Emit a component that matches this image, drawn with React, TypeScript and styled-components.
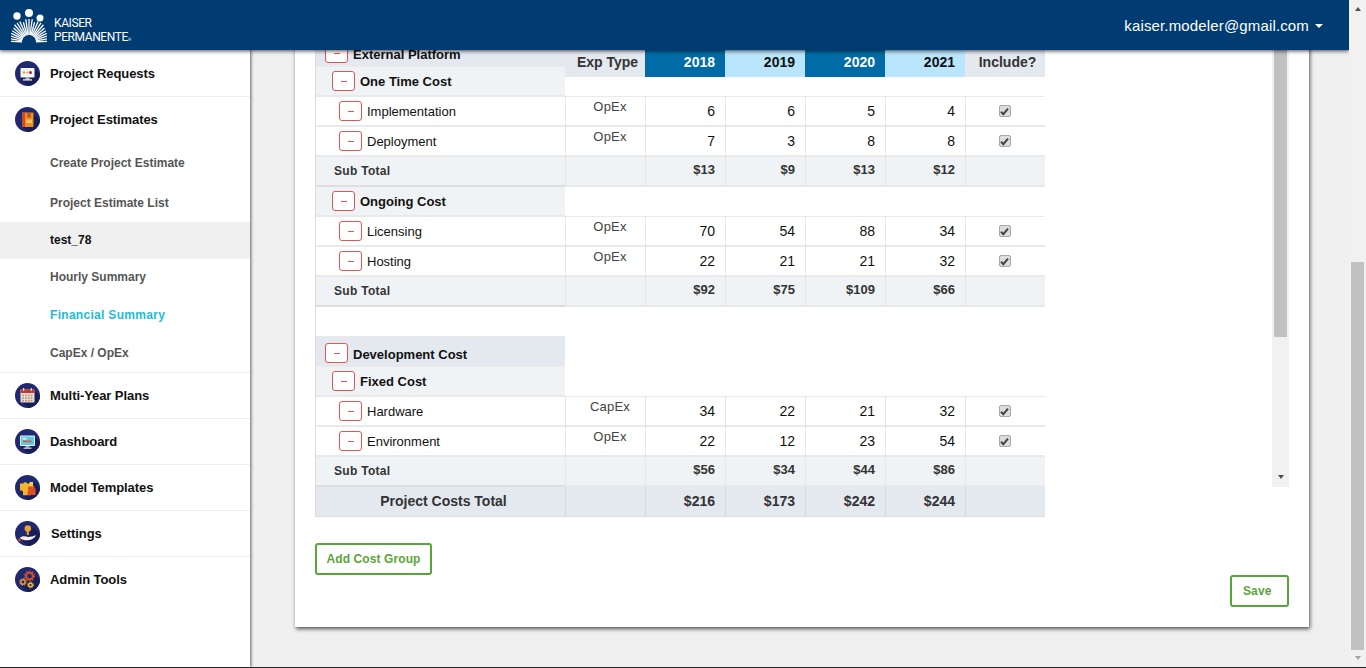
import React from "react";
import styled, { createGlobalStyle } from "styled-components";

const GlobalStyle = createGlobalStyle`
  html, body {
    margin: 0;
    height: 100%;
    overflow: hidden;
    background: #f0f0f0;
    font-family: "Liberation Sans", Arial, sans-serif;
  }
  * { box-sizing: border-box; }
`;

type IconName = "requests" | "estimates" | "plans" | "dashboard" | "templates" | "settings" | "admin";

const CircleIcon = ({ name }: { name: IconName }) => (
  <svg width="25" height="25" viewBox="0 0 25 25">
    <defs>
      <clipPath id={`clip-${name}`}>
        <circle cx="12.5" cy="12.5" r="12.5" />
      </clipPath>
    </defs>
    <circle cx="12.5" cy="12.5" r="12.5" fill="#20296f" />
    <path d="M6 18 L19 7 L27 15 L27 27 L15 27 Z" fill="#171e55" clipPath={`url(#clip-${name})`} />
    {name === "requests" && (
      <>
        <rect x="5.5" y="7" width="14" height="9.5" rx="1" fill="#f4f4f4" />
        <rect x="10.5" y="16.5" width="4" height="2" fill="#bdbdbd" />
        <rect x="8" y="18.2" width="9" height="1.4" fill="#e6e6e6" />
        <circle cx="9" cy="11.5" r="1.3" fill="#eda13a" />
        <circle cx="12.3" cy="11.5" r="0.9" fill="#eda13a" />
        <circle cx="15.5" cy="11.5" r="1.5" fill="#a8242a" />
      </>
    )}
    {name === "estimates" && (
      <>
        <rect x="7" y="5.5" width="11.5" height="14.5" rx="1" fill="#ee8d22" />
        <rect x="7" y="5.5" width="3" height="14.5" fill="#d4481d" />
        <rect x="12.5" y="5.5" width="3" height="5" fill="#b4521f" />
        <rect x="11" y="12.5" width="6" height="3.5" fill="#f7bd6b" />
      </>
    )}
    {name === "plans" && (
      <>
        <rect x="5.5" y="6.5" width="14" height="13" rx="1" fill="#e4e0da" />
        <rect x="5.5" y="6.5" width="14" height="3.5" fill="#c9352c" />
        <rect x="8" y="5" width="1.2" height="3" fill="#f3d9a0" />
        <rect x="15.8" y="5" width="1.2" height="3" fill="#f3d9a0" />
        {[7.2, 10, 12.8, 15.6].map((x) =>
          [11.5, 14.2, 16.8].map((y) => <rect key={`${x}-${y}`} x={x} y={y} width="1.8" height="1.8" fill="#c99a80" />)
        )}
      </>
    )}
    {name === "dashboard" && (
      <>
        <rect x="5" y="6.5" width="15" height="10.5" rx="1" fill="#e9f3f6" />
        <rect x="6" y="7.5" width="13" height="8.5" fill="#58cde4" />
        <rect x="7.5" y="9" width="4" height="1.5" fill="#f3f3f3" />
        <rect x="8" y="11.5" width="8.5" height="1.8" fill="#e2574c" />
        <rect x="10.5" y="17" width="4" height="1.8" fill="#a9a9a9" />
        <rect x="8.5" y="18.6" width="8" height="1.2" fill="#dedede" />
      </>
    )}
    {name === "templates" && (
      <>
        <path d="M5 8.500h3.200a2.200 2.200 0 0 1 4 0h3.300v3.600h-2v3.200h2v5H8v-3.200a1.800 1.800 0 0 0-3-1.400z" fill="#f4b52c" />
        <path d="M13 11.500h3.200a1.800 1.800 0 0 1 3.200 1.700h1.100v6.800H12.500v-3.400a1.700 1.700 0 0 0 .5-3z" fill="#e0511f" />
        <path d="M14.500 7h3.500v4.500h-3.500z" fill="#f8cf52" />
      </>
    )}
    {name === "settings" && (
      <>
        <circle cx="12.8" cy="7.5" r="3.2" fill="#f0a02c" />
        <rect x="11.8" y="10" width="2" height="4" fill="#dfa456" />
        <path d="M5 16.5c3-2 6-1.500 8-.5l4-.5c1.500-.2 2.500-1 4-1.200-1 2.500-4 4.700-8 5-2.500.2-5-.5-7-1.300z" fill="#f5f1ea" />
        <path d="M3.500 17l3 1.500-1.500 2.200-2.500-1.500z" fill="#c5402d" />
      </>
    )}
    {name === "admin" && (
      <>
        <circle cx="14.500" cy="9" r="3.400" fill="none" stroke="#c9502a" strokeWidth="2.200" />
        <circle cx="14.500" cy="9" r="5" fill="none" stroke="#c9502a" strokeWidth="1.200" strokeDasharray="1.600 1.600" />
        <circle cx="8" cy="15" r="2.200" fill="none" stroke="#ee9b32" strokeWidth="1.500" />
        <circle cx="8" cy="15" r="3.400" fill="none" stroke="#ee9b32" strokeWidth="1" strokeDasharray="1.300 1.300" />
        <circle cx="15.500" cy="18" r="1.800" fill="none" stroke="#f1bd37" strokeWidth="1.400" />
        <circle cx="15.500" cy="18" r="3" fill="none" stroke="#f1bd37" strokeWidth="1" strokeDasharray="1.200 1.200" />
      </>
    )}
  </svg>
);

// outer edge of the sunburst at a given angle: three humps for the three figures
const rayLength = (deg: number) => {
  const a = Math.abs(deg);
  if (a < 10) return 23;
  if (a < 22) return 20.5;
  if (a < 45) return 22.5;
  return 21 - ((a - 45) / 45) * 3;
};

const logoRays = Array.from({ length: 23 }, (_, i) => {
  const deg = -88 + i * 8;
  const rad = (deg * Math.PI) / 180;
  const outer = rayLength(deg);
  return {
    x1: 18 + 7 * Math.sin(rad),
    y1: 33 - 7 * Math.cos(rad),
    x2: 18 + outer * Math.sin(rad),
    y2: 33 - outer * Math.cos(rad),
  };
});

const LogoMark = () => (
  <svg width="36" height="34" viewBox="0 0 36 34">
    <circle cx="6" cy="7" r="3.700" fill="#fff" />
    <circle cx="18" cy="4" r="4" fill="#fff" />
    <circle cx="29" cy="9" r="3.500" fill="#fff" />
    {logoRays.map((r, i) => (
      <line key={i} x1={r.x1} y1={r.y1} x2={r.x2} y2={r.y2} stroke="#fff" strokeWidth="1.300" />
    ))}
  </svg>
);

const Check = () => (
  <svg width="9" height="9" viewBox="0 0 9 9">
    <path d="M1 4.800 L3.300 7.200 L8 1.600" fill="none" stroke="#444" strokeWidth="2" />
  </svg>
);

const Frame = styled.div`
  display: flex;
  height: 667px;
`;

const BottomLine = styled.div`
  height: 1px;
  background: #222;
`;

const Column = styled.div`
  width: 1349px;
  display: flex;
  flex-direction: column;
  overflow: hidden;
`;

const TopBar = styled.header`
  position: relative;
  z-index: 3;
  flex: none;
  height: 50px;
  background: #003b71;
  box-shadow: 0 1px 4px rgba(0, 0, 0, 0.7);
  display: flex;
  align-items: center;
  justify-content: space-between;
  padding: 0 26px 0 11px;
`;

const Brand = styled.div`
  display: flex;
  align-items: center;
  gap: 7px;
  padding-top: 1px;
`;

const BrandText = styled.div`
  color: #fff;
  font-family: Roboto, "Liberation Sans", sans-serif;
  font-size: 12px;
  line-height: 14px;
  letter-spacing: -0.400px;
  padding-top: 12px;

  sup {
    font-size: 4px;
    letter-spacing: 0;
    vertical-align: baseline;
  }
`;

const UserMenu = styled.div`
  display: flex;
  align-items: center;
  gap: 6px;
  color: #fff;
  font-size: 15px;
  letter-spacing: 0.150px;
`;

const Caret = styled.span`
  border-left: 4px solid transparent;
  border-right: 4px solid transparent;
  border-top: 4px solid #fff;
  margin-top: 1px;
`;

const Body = styled.div`
  flex: 1;
  display: flex;
  min-height: 0;
`;

const Sidebar = styled.nav`
  position: relative;
  z-index: 2;
  flex: none;
  width: 250px;
  background: #fff;
  box-shadow: 1px 0 3px rgba(0, 0, 0, 0.6);
  padding-top: 1px;
`;

const NavRow = styled.div<{ $line?: boolean; $gap?: number }>`
  height: ${(p) => (p.$line ? 46 : 45)}px;
  display: flex;
  align-items: center;
  gap: ${(p) => p.$gap ?? 10}px;
  padding-left: 15px;
  border-bottom: ${(p) => (p.$line ? "1px solid #eee" : "none")};
  color: #111;
  font-size: 13px;
  font-weight: 700;
  letter-spacing: -0.080px;

  svg {
    flex: none;
  }
`;

const SubNav = styled.div`
  border-bottom: 1px solid #eee;
`;

const SubItem = styled.div<{ $height: number; $nudge?: number; $active?: boolean; $current?: boolean }>`
  height: ${(p) => p.$height}px;
  display: flex;
  align-items: center;
  padding-left: 50px;
  padding-top: ${(p) => Math.max(p.$nudge ?? 0, 0) * 2}px;
  padding-bottom: ${(p) => Math.max(-(p.$nudge ?? 0), 0) * 2}px;
  font-size: 12px;
  font-weight: 700;
  letter-spacing: ${(p) => (p.$current ? 0.300 : 0)}px;
  color: ${(p) => (p.$current ? "#1dbcd6" : p.$active ? "#111" : "#555")};
  background: ${(p) => (p.$active ? "#f0f0f0" : "transparent")};
`;

const Main = styled.main`
  flex: 1;
  min-width: 0;
  padding: 0 40px 0 45px;
`;

const Card = styled.section`
  margin-top: -33px;
  height: 610px;
  background: #fff;
  box-shadow: 1px 2px 4px rgba(0, 0, 0, 0.65);
  padding: 20px;
  display: flex;
  flex-direction: column;
`;

const Scroller = styled.div`
  flex: none;
  height: 450px;
  display: flex;
  justify-content: space-between;
  overflow: hidden;
`;

const Table = styled.div`
  width: 730px;
  display: flex;
`;

const Labels = styled.div`
  flex: none;
  width: 250px;
  border-left: 1px solid #ddd;
`;

const LabelRow = styled.div<{ $kind: string }>`
  height: 30px;
  display: flex;
  align-items: center;
  gap: 5px;
  padding-top: ${(p) => (p.$kind === "group" ? 4 : 0)}px;
  padding-left: ${(p) =>
    ({ group: 9, cat: 16, item: 23, sub: 18, blank: 0 } as Record<string, number>)[p.$kind]}px;
  background: ${(p) =>
    ({ group: "#e4e8ef", cat: "#f0f3f6", item: "#fff", sub: "#f0f3f6", blank: "#fff" } as Record<string, string>)[
      p.$kind
    ]};
  border-bottom: ${(p) => (p.$kind === "blank" ? 1 : 2)}px solid ${(p) => (p.$kind === "sub" ? "#dedede" : "#e9e9e9")};
  color: ${(p) => (p.$kind === "sub" ? "#333" : "#111")};
  font-size: ${(p) => (p.$kind === "sub" ? 12 : 13)}px;
  font-weight: ${(p) => (p.$kind === "item" ? 400 : 700)};
  letter-spacing: ${(p) => (p.$kind === "sub" ? 0.300 : 0)}px;
`;

const LabelText = styled.span<{ $kind: string }>`
  padding-top: ${(p) => (p.$kind === "group" ? 2 : 0)}px;
`;

const Collapse = styled.span`
  flex: none;
  width: 23px;
  height: 20px;
  border: 1px solid #e05555;
  border-radius: 3px;
  background: #fff;
  display: flex;
  align-items: center;
  justify-content: center;

  &::before {
    content: "";
    width: 6px;
    height: 1px;
    background: #e05555;
  }
`;

const Values = styled.div`
  flex: none;
  width: 480px;
`;

const HeadRow = styled.div`
  height: 40px;
  display: grid;
  grid-template-columns: repeat(6, 80px);
`;

const HeadGap = styled.div`
  height: 20px;
  border-bottom: 1px solid #e9e9e9;
`;

const HeadCell = styled.div<{ $tone: "plain" | "dark" | "light" }>`
  display: flex;
  align-items: flex-end;
  justify-content: ${(p) => (p.$tone === "plain" ? "center" : "flex-end")};
  padding: 0 ${(p) => (p.$tone === "plain" ? 0 : 10)}px 7px ${(p) => (p.$tone === "plain" ? 5 : 0)}px;
  font-size: 14px;
  font-weight: 700;
  background: ${(p) => ({ plain: "#e4e8ef", dark: "#006ba6", light: "#b9e5fd" })[p.$tone]};
  color: ${(p) => ({ plain: "#333", dark: "#fff", light: "#111" })[p.$tone]};
`;

const ValueRow = styled.div<{ $kind: string }>`
  height: 30px;
  display: grid;
  grid-template-columns: repeat(6, 80px);
  background: ${(p) => (p.$kind === "sub" ? "#f0f3f6" : "#fff")};
  border-bottom: ${(p) => (p.$kind === "cat" ? "1px solid #e9e9e9" : "none")};
`;

const Cell = styled.div<{ $kind: string }>`
  display: flex;
  align-items: center;
  justify-content: flex-end;
  padding: 0 10px ${(p) => (p.$kind === "sub" ? 4 : 0)}px 0;
  border-left: 1px solid #e6e6e6;
  border-bottom: 2px solid ${(p) => (p.$kind === "sub" ? "#e6e9ec" : "#e9e9e9")};
  color: ${(p) => (p.$kind === "sub" ? "#333" : "#111")};
  font-size: ${(p) => (p.$kind === "sub" ? 13 : 14)}px;
  font-weight: ${(p) => (p.$kind === "sub" ? 700 : 400)};
`;

const TypeCell = styled.div<{ $kind: string }>`
  border-left: 1px solid #e6e6e6;
  border-bottom: 2px solid ${(p) => (p.$kind === "sub" ? "#e6e9ec" : "#e9e9e9")};
  padding: 2px 0 0 9px;
  text-align: center;
  font-size: 13px;
  line-height: 16px;
  letter-spacing: 0.200px;
  color: #444;
`;

const CheckCell = styled.div`
  display: flex;
  align-items: center;
  justify-content: center;
  padding-right: 2px;
  border-left: 1px solid #e6e6e6;
  border-bottom: 2px solid #e9e9e9;
`;

const CheckBox = styled.span`
  width: 12px;
  height: 12px;
  border: 1px solid #a8a8a8;
  border-radius: 2px;
  background: #dcdcdc;
  display: flex;
  align-items: center;
  justify-content: center;
`;

const TotalRow = styled.div`
  flex: none;
  width: 730px;
  height: 30px;
  display: grid;
  grid-template-columns: 249px repeat(6, 80px);
  background: #e4e8ef;
  border-left: 1px solid #ddd;
  border-bottom: 1px solid #ddd;
  font-size: 14px;
  font-weight: 700;
  color: #333;
`;

const TotalLabel = styled.div`
  display: flex;
  align-items: center;
  justify-content: center;
  padding: 0 0 1px 6px;
`;

const TotalCell = styled.div`
  display: flex;
  align-items: center;
  justify-content: flex-end;
  padding: 0 10px 1px 0;
  border-left: 1px solid #d8dae0;
`;

const OutlineButton = styled.button<{ $align?: string }>`
  flex: none;
  align-self: ${(p) => p.$align ?? "flex-start"};
  height: 32px;
  border: 2px solid #57a639;
  border-radius: 3px;
  background: #fff;
  color: #57a639;
  font: 700 12px "Liberation Sans", Arial, sans-serif;
  letter-spacing: 0.100px;
  padding: 0 11px;
`;

const AddButton = styled(OutlineButton)`
  width: 117px;
  margin-top: 26px;
  padding: 0;
`;

const SaveButton = styled(OutlineButton)`
  width: 59px;
  text-align: left;
`;

const ScrollTrack = styled.div<{ $height?: number }>`
  flex: none;
  width: 17px;
  height: ${(p) => (p.$height ? `${p.$height}px` : "100%")};
  background: #f1f1f1;
  display: flex;
  flex-direction: column;
  align-items: center;
`;

const ScrollThumb = styled.div<{ $top: number; $length: number }>`
  width: 13px;
  height: ${(p) => p.$length}px;
  margin-top: ${(p) => p.$top}px;
  background: #c1c1c1;
`;

const ScrollArrow = styled.span<{ $dir: "up" | "down"; $color: string; $top?: number }>`
  flex: none;
  margin-top: ${(p) => p.$top ?? 0}px;
  border-left: 3.500px solid transparent;
  border-right: 3.500px solid transparent;
  ${(p) =>
    p.$dir === "up" ? `border-bottom: 4px solid ${p.$color};` : `border-top: 4px solid ${p.$color};`}
`;

const years = ["2018", "2019", "2020", "2021"];

type Row = { kind: "group" | "cat" | "item" | "sub" | "blank"; label?: string; type?: string; values?: string[] };

const rows: Row[] = [
  { kind: "group", label: "External Platform" },
  { kind: "cat", label: "One Time Cost" },
  { kind: "item", label: "Implementation", type: "OpEx", values: ["6", "6", "5", "4"] },
  { kind: "item", label: "Deployment", type: "OpEx", values: ["7", "3", "8", "8"] },
  { kind: "sub", label: "Sub Total", values: ["$13", "$9", "$13", "$12"] },
  { kind: "cat", label: "Ongoing Cost" },
  { kind: "item", label: "Licensing", type: "OpEx", values: ["70", "54", "88", "34"] },
  { kind: "item", label: "Hosting", type: "OpEx", values: ["22", "21", "21", "32"] },
  { kind: "sub", label: "Sub Total", values: ["$92", "$75", "$109", "$66"] },
  { kind: "blank" },
  { kind: "group", label: "Development Cost" },
  { kind: "cat", label: "Fixed Cost" },
  { kind: "item", label: "Hardware", type: "CapEx", values: ["34", "22", "21", "32"] },
  { kind: "item", label: "Environment", type: "OpEx", values: ["22", "12", "23", "54"] },
  { kind: "sub", label: "Sub Total", values: ["$56", "$34", "$44", "$86"] },
];

export default function App() {
  return (
    <>
      <GlobalStyle />
      <Frame>
        <Column>
          <TopBar>
            <Brand>
              <LogoMark />
              <BrandText>
                KAISER
                <br />
                PERMANENTE<sup>®</sup>
              </BrandText>
            </Brand>
            <UserMenu>
              kaiser.modeler@gmail.com
              <Caret />
            </UserMenu>
          </TopBar>
          <Body>
            <Sidebar>
              <NavRow $line>
                <CircleIcon name="requests" />
                Project Requests
              </NavRow>
              <NavRow>
                <CircleIcon name="estimates" />
                Project Estimates
              </NavRow>
              <SubNav>
                <SubItem $height={40} $nudge={1}>
                  Create Project Estimate
                </SubItem>
                <SubItem $height={40} $nudge={1}>
                  Project Estimate List
                </SubItem>
                <SubItem $height={37} $active $nudge={-1}>
                  test_78
                </SubItem>
                <SubItem $height={37} $nudge={-1}>
                  Hourly Summary
                </SubItem>
                <SubItem $height={38} $current>
                  Financial Summary
                </SubItem>
                <SubItem $height={38}>CapEx / OpEx</SubItem>
              </SubNav>
              <NavRow $line>
                <CircleIcon name="plans" />
                Multi-Year Plans
              </NavRow>
              <NavRow $line>
                <CircleIcon name="dashboard" />
                Dashboard
              </NavRow>
              <NavRow $line>
                <CircleIcon name="templates" />
                Model Templates
              </NavRow>
              <NavRow $line $gap={11}>
                <CircleIcon name="settings" />
                Settings
              </NavRow>
              <NavRow>
                <CircleIcon name="admin" />
                Admin Tools
              </NavRow>
            </Sidebar>
            <Main>
              <Card>
                <Scroller>
                  <Table>
                    <Labels>
                      {rows.map((r, i) => (
                        <LabelRow key={i} $kind={r.kind}>
                          {r.kind !== "sub" && r.kind !== "blank" && <Collapse />}
                          <LabelText $kind={r.kind}>{r.label}</LabelText>
                        </LabelRow>
                      ))}
                    </Labels>
                    <Values>
                      <HeadRow>
                        <HeadCell $tone="plain">Exp Type</HeadCell>
                        {years.map((y, i) => (
                          <HeadCell key={y} $tone={i % 2 ? "light" : "dark"}>
                            {y}
                          </HeadCell>
                        ))}
                        <HeadCell $tone="plain">Include?</HeadCell>
                      </HeadRow>
                      <HeadGap />
                      {rows.slice(2).map((r, i) =>
                        r.values ? (
                          <ValueRow key={i} $kind={r.kind}>
                            <TypeCell $kind={r.kind}>{r.type}</TypeCell>
                            {r.values.map((v, j) => (
                              <Cell key={j} $kind={r.kind}>
                                {v}
                              </Cell>
                            ))}
                            {r.kind === "item" ? (
                              <CheckCell>
                                <CheckBox>
                                  <Check />
                                </CheckBox>
                              </CheckCell>
                            ) : (
                              <Cell $kind={r.kind} />
                            )}
                          </ValueRow>
                        ) : (
                          <ValueRow key={i} $kind={r.kind} />
                        )
                      )}
                    </Values>
                  </Table>
                  <ScrollTrack>
                    <ScrollThumb $top={0} $length={300} />
                    <ScrollArrow $dir="down" $color="#505050" $top={138} />
                  </ScrollTrack>
                </Scroller>
                <TotalRow>
                  <TotalLabel>Project Costs Total</TotalLabel>
                  <TotalCell />
                  <TotalCell>$216</TotalCell>
                  <TotalCell>$173</TotalCell>
                  <TotalCell>$242</TotalCell>
                  <TotalCell>$244</TotalCell>
                  <TotalCell />
                </TotalRow>
                <AddButton>Add Cost Group</AddButton>
                <SaveButton $align="flex-end">Save</SaveButton>
              </Card>
            </Main>
          </Body>
        </Column>
        <ScrollTrack>
          <ScrollArrow $dir="up" $color="#505050" $top={7} />
          <ScrollThumb $top={251} $length={388} />
          <ScrollArrow $dir="down" $color="#a3a3a3" $top={6} />
        </ScrollTrack>
      </Frame>
      <BottomLine />
    </>
  );
}
